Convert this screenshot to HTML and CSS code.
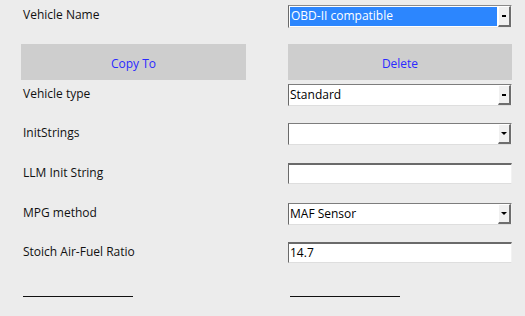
FILE: index.html
```html
<!DOCTYPE html>
<html>
<head>
<meta charset="utf-8">
<link rel="stylesheet" href="styles.css">
</head>
<body>
<div class="form">
  <div class="label">Vehicle Name</div>
  <div class="combo selected"><span class="value">OBD-II compatible</span><span class="drop"><i class="dash"></i></span></div>

  <div class="btn">Copy To</div>
  <div class="btn">Delete</div>

  <div class="label">Vehicle type</div>
  <div class="combo"><span class="value">Standard</span><span class="drop"><i class="dash"></i></span></div>

  <div class="label">InitStrings</div>
  <div class="combo"><span class="value"></span><span class="drop"><i class="tri"></i></span></div>

  <div class="label">LLM Init String</div>
  <div class="field"></div>

  <div class="label">MPG method</div>
  <div class="combo"><span class="value">MAF Sensor</span><span class="drop"><i class="tri"></i></span></div>

  <div class="label">Stoich Air-Fuel Ratio</div>
  <div class="field"><span class="value">14.7</span></div>

  <div class="rule left"></div>
  <div class="rule right"></div>
</div>
</body>
</html>
```

FILE: styles.css
```css
html, body {
  margin: 0;
  padding: 0;
  background: #ececec;
  width: 525px;
  height: 316px;
  overflow: hidden;
  font-family: "Open Sans", "Noto Sans", sans-serif;
  font-size: 12px;
  color: #111;
}

.form {
  display: grid;
  grid-template-columns: 225px 224px;
  grid-template-rows: 39px 40px 39px 40px 40px 39px 54px 10px;
  column-gap: 42px;
  padding: 5px 0 0 21px;
  align-items: start;
}

.label {
  padding: 2px 0 0 2px;
  line-height: 16px;
  height: 18px;
}

.combo, .field {
  box-sizing: border-box;
  height: 22px;
  background: #fff;
  border-top: 1px solid #7d7d7d;
  border-left: 1px solid #6a6a6a;
  border-bottom: 1px solid #dedede;
  border-right: 1px solid #f2f2f2;
  display: flex;
  align-items: stretch;
}

.combo.selected {
  height: 23px;
  border-top-color: #8a8a8a;
  border-bottom-color: #e6e6e6;
}

.value {
  flex: 1;
  padding-left: 1px;
  line-height: 19px;
  color: #000;
  white-space: nowrap;
}

.selected .value {
  background: #2c86fe;
  color: #fff;
  border: 1px solid #fff;
  padding-left: 1px;
  line-height: 18px;
}

.drop {
  box-sizing: border-box;
  width: 13px;
  background: #f0f0f0;
  border-left: 1px solid #fff;
  border-top: 1px solid #fff;
  border-right: 2px solid #6d6d6d;
  border-bottom: 2px solid #6d6d6d;
  display: flex;
  align-items: center;
  justify-content: center;
}

.dash {
  display: block;
  width: 4px;
  height: 2px;
  background: #000;
  margin-left: -1px;
}

.tri {
  display: block;
  width: 0;
  height: 0;
  border-left: 3px solid transparent;
  border-right: 3px solid transparent;
  border-top: 3px solid #000;
  margin-left: -1px;
}

.field {
  border-top: 2px solid #6a6a6a;
  height: 21px;
}

.field .value {
  line-height: 18px;
}

.btn {
  height: 36px;
  background: #cecece;
  color: #2a2aff;
  display: flex;
  align-items: center;
  justify-content: center;
  padding-top: 2px;
  box-sizing: border-box;
}

.rule {
  height: 1px;
  background: #111;
  width: 110px;
}

.rule.left {
  margin-left: 2px;
}

.rule.right {
  margin-left: 2px;
}
```
